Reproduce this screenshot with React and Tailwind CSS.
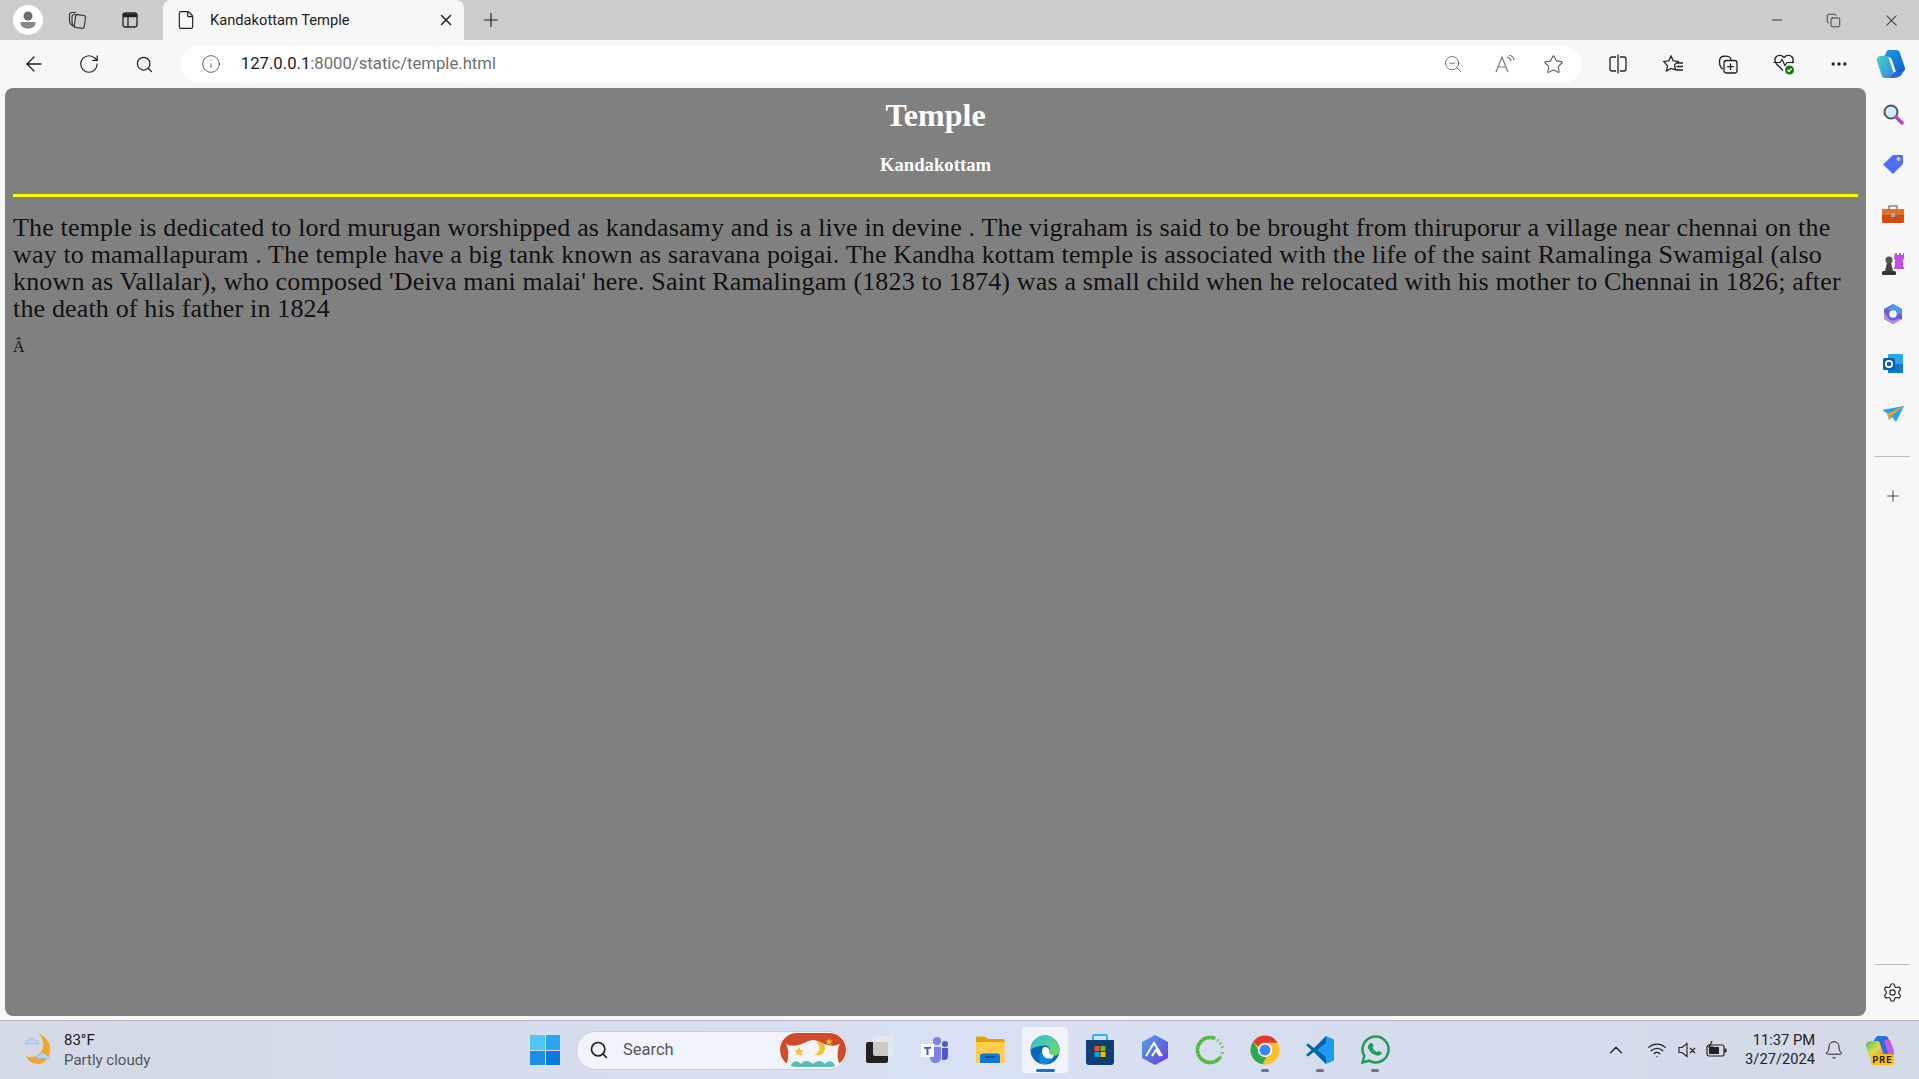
import React from "react";
import {
    ArrowLeft, RotateCw, Search, Info, ZoomOut, Star, Plus, X, Minus, Ellipsis,
    Settings, ChevronUp, Wifi, Bell, File, Copy,
} from "lucide-react";

const Profile = () => (
    <div className="w-[30px] h-[30px] rounded-full bg-white flex items-center justify-center">
        <svg width="24" height="24" viewBox="0 0 24 24">
            <circle cx="12" cy="8" r="4.500" fill="#6e6e6e" />
            <path d="M4.500 14h15v1.500c0 3-3.500 5-7.500 5s-7.500-2-7.500-5z" fill="#8a8a8a" />
        </svg>
    </div>
);

const Workspaces = () => (
    <svg width="20" height="20" viewBox="0 0 20 20" fill="none" stroke="#333" strokeWidth="1.1">
        <rect x="8" y="5" width="10" height="13" rx="2" transform="rotate(8 13 11)" fill="#ccc" />
        <path d="M6 16c-2-1-3.500-3-3.500-6V5c0-1.500 1-2.500 2.500-2.500h4" />
        <path d="M8 17c-2-1-3-3-3-5V7c0-1.500 1-2.500 2.500-2.500h4" />
    </svg>
);

const TabsIcon = () => (
    <svg width="20" height="20" viewBox="0 0 20 20" fill="none" stroke="#222" strokeWidth="1.3">
        <rect x="3" y="3" width="14" height="14" rx="2.500" />
        <path d="M3 5.500h14" strokeWidth="3.500" />
        <path d="M8 7v10" />
    </svg>
);

const ReadAloud = () => (
    <svg width="22" height="22" viewBox="0 0 22 22" fill="none" stroke="#777" strokeWidth="1.2">
        <path d="M2 19 8 4l6 15M4.500 14h7" />
        <path d="M13 4c2 .5 3.500 2 4 4M15 2c2.500.5 4.500 2.500 5 5" />
    </svg>
);

const SplitScreen = () => (
    <svg width="22" height="22" viewBox="0 0 22 22" fill="none" stroke="#222" strokeWidth="1.3">
        <path d="M9 4H5C3.800 4 3 4.800 3 6v10c0 1.200.8 2 2 2h4M13 4h4c1.200 0 2 .8 2 2v10c0 1.200-.8 2-2 2h-4M11 1.500v19" />
    </svg>
);

const FavList = () => (
    <svg width="22" height="22" viewBox="0 0 22 22" fill="none" stroke="#222" strokeWidth="1.3">
        <path d="m9 3 2.200 4.800 5 .6-3.700 3.500 1 5L9 15.400 4.500 18l1-5.100L1.800 8.400l5-.6z" />
        <path d="M15 10h6M14.500 13.500H21M14 17h7" />
    </svg>
);

const Collections = () => (
    <svg width="22" height="22" viewBox="0 0 22 22" fill="none" stroke="#222" strokeWidth="1.3">
        <path d="M6 16c-2-1-3.500-4-3.500-7 0-3 1-5 3-5.500 2-.5 5-.5 7 .5 1 .5 1.500 1.500 1.500 3" />
        <rect x="7" y="7.500" width="13" height="12.500" rx="2.500" fill="#f7f7f7" />
        <path d="M13.500 10.500v6.500M10.200 13.700h6.600" />
    </svg>
);

const Health = () => (
    <svg width="24" height="24" viewBox="0 0 24 24" fill="none">
        <path d="M12 5.500C10 2.800 6 2.500 4 5c-1.500 2-1.200 5 .8 7.200L11 18.500M12 5.500c2-2.700 6-3 8-.5 1.500 2 1.200 4.500 0 6" stroke="#222" strokeWidth="1.3" />
        <path d="M1.500 10.500H8l2-3 3 6 2-3h7" stroke="#222" strokeWidth="1.2" />
        <circle cx="17.500" cy="18" r="4.500" fill="#107c10" />
        <path d="m15.500 18 1.500 1.500 2.500-3" stroke="#fff" strokeWidth="1.2" />
    </svg>
);

const Copilot = ({ size = 30 }) => (
    <svg width={size} height={size} viewBox="0 0 30 30">
        <defs>
            <linearGradient id="cpa" x1="0" y1="0" x2="1" y2="1">
                <stop offset="0" stopColor="#1b9de2" />
                <stop offset="1" stopColor="#0b5fd0" />
            </linearGradient>
            <linearGradient id="cpb" x1="0" y1="0" x2="1" y2="1">
                <stop offset="0" stopColor="#37d6c0" />
                <stop offset="1" stopColor="#2f7fe6" />
            </linearGradient>
        </defs>
        <path d="M13 1h7c2 0 3.500 1.200 4 3l5 15c.5 2-1 4-3 4h-6l-4-12c-.5-2-2-3-4-3H8l2-4c.5-2 1.500-3 3-3z" fill="url(#cpa)" />
        <path d="M4 7h8l5 15c.5 2-.5 7-4 7H9c-2 0-3-1-3.500-3L1 12c-.5-2 1-5 3-5z" fill="url(#cpb)" opacity=".95" />
        <path d="M17 29h-5c2 0 3.500-1.500 4-3l2-3h9c-1 3-4 6-10 6z" fill="#2563d8" />
    </svg>
);

// coloured extension icons of the sidebar
const SideIcons = [
    <svg key="s" width="22" height="22" viewBox="0 0 22 22">
        <circle cx="9" cy="9" r="6.500" fill="#cfeaf8" stroke="#555" strokeWidth="2" />
        <path d="m14 14 6 6" stroke="#c837d8" strokeWidth="3.500" strokeLinecap="round" />
    </svg>,
    <svg key="t" width="22" height="22" viewBox="0 0 22 22">
        <path d="M11 2h9c.6 0 1 .4 1 1v8l-10 10L1 11.500z" fill="#4f6ef7" />
        <circle cx="16.500" cy="6" r="2" fill="#f4c542" />
    </svg>,
    <svg key="b" width="24" height="22" viewBox="0 0 24 22">
        <path d="M8 6V3h8v3" fill="none" stroke="#888" strokeWidth="1.500" />
        <rect x="1" y="6" width="22" height="14" rx="1.500" fill="#cf4e14" />
        <rect x="1" y="6" width="22" height="6" fill="#e2702a" />
        <rect x="10" y="10" width="4" height="4" fill="#aaa" />
    </svg>,
    <svg key="c" width="24" height="24" viewBox="0 0 24 24">
        <path d="M14 1h2v2h2V1h2v2h2V1h1v6l-1 1v7h-8V8l-1-1z" fill="#c04ee8" />
        <path d="M13 15h10v2H13z" fill="#c04ee8" />
        <circle cx="8" cy="8" r="3.500" fill="#555" />
        <path d="M6 11h4l2 8H4z" fill="#444" />
        <rect x="1" y="19" width="14" height="4" rx="1.500" fill="#333" />
    </svg>,
    <svg key="m" width="22" height="22" viewBox="0 0 22 22">
        <path d="M11 1 20 6v10l-9 5-9-5V6z" fill="#6a5fd6" />
        <path d="M11 1 20 6v5h-5c0-2-2-4-4-4H5z" fill="#3f9fe0" />
        <path d="M2 9v7l9 5 9-5h-5c-2 2-6 2-8 0z" fill="#b78be0" />
        <circle cx="11" cy="11" r="3.800" fill="#f7f7f7" />
    </svg>,
    <svg key="o" width="22" height="22" viewBox="0 0 22 22">
        <rect x="6" y="1" width="15" height="19" rx="1" fill="#28a8ea" />
        <path d="M6 11h15v9H6z" fill="#0f78d4" />
        <rect x="1" y="5" width="12" height="12" rx="1.500" fill="#0a5fb0" />
        <circle cx="7" cy="11" r="3.200" fill="none" stroke="#fff" strokeWidth="1.700" />
    </svg>,
    <svg key="p" width="22" height="18" viewBox="0 0 22 18">
        <path d="M0 5 22 1 14 17l-4-5-3 3-1-6z" fill="#29a3f0" />
        <path d="M5 9 22 1 9 11 7 15z" fill="#f0a51e" />
    </svg>,
];

const Windows = () => (
    <div className="grid grid-cols-2 gap-[1px] w-[30px] h-[30px]">
        <div className="bg-[#52c5f8]" />
        <div className="bg-[#2ba5ef]" />
        <div className="bg-[#1a8fe6]" />
        <div className="bg-[#0a78dc]" />
    </div>
);

const SearchArt = () => (
    <svg width="66" height="34" viewBox="0 0 66 34" className="rounded-full">
        <rect width="66" height="34" fill="#f4f4fb" />
        <path d="M0 0h66v5c-5 7-11 9-18 7-6-1-10-5-15-5s-9 4-15 5C11 14 5 12 0 5z" fill="#d24a2a" />
        <path d="M0 4c8 5 10 16 7 26H0zM66 4c-8 5-10 16-7 26h7z" fill="#d24a2a" />
        <path d="M10 34c3-7 8-7 11-3 3-4 8-4 12 0 4-4 9-4 12 0 3-4 8-4 11 3z" fill="#5bbcb4" />
        <path d="M36 9c5 3 5 10-2 13 4 1 9 0 11-5 1-5-3-9-9-8z" fill="#f3c12f" />
        <path d="m19 14 1.500 3 3 .5-2.200 2 .5 3-2.800-1.500-2.800 1.500.5-3-2.200-2 3-.5zM49 5l1 2.500 2.500.3-1.800 1.700.5 2.500-2.200-1.200-2.200 1.200.5-2.500-1.800-1.700 2.500-.3z" fill="#f3c12f" />
    </svg>
);

const TaskView = () => (
    <svg width="30" height="30" viewBox="0 0 30 30">
        <rect x="1" y="7" width="22" height="21" rx="2" fill="#222" />
        <rect x="8" y="1" width="21" height="20" rx="2" fill="#e8e8ea" fillOpacity=".85" />
    </svg>
);

const Teams = () => (
    <svg width="28" height="28" viewBox="0 0 28 28">
        <circle cx="16" cy="5" r="4" fill="#7b83eb" />
        <circle cx="24" cy="8" r="3" fill="#5059c9" />
        <path d="M9 11h11v10c0 4-2.500 6-5.500 6S9 25 9 21z" fill="#7b83eb" />
        <path d="M21 12h6v8c0 3-2 4-4 4h-2z" fill="#5059c9" />
        <rect x="0" y="8" width="13" height="13" fill="#fff" />
        <path d="M3 11h7v1.800H7.500V19h-2v-6.200H3z" fill="#4b53bc" />
    </svg>
);

const Folder = () => (
    <svg width="30" height="28" viewBox="0 0 30 28">
        <path d="M1 2c0-1 .5-1.500 1.500-1.500H10L13 3h15c1 0 1.500.5 1.500 1.500V8H1z" fill="#e0a400" />
        <path d="M1 6h28.500v21H1z" fill="#ffcd4a" />
        <path d="M5 20c0-1.500 1-2.500 2.500-2.500h15c1.500 0 2.500 1 2.500 2.500v7H5z" fill="#0f78d4" />
        <path d="M10 21h10" stroke="#063f78" strokeWidth="1.200" />
    </svg>
);

const Edge = () => (
    <svg width="30" height="30" viewBox="0 0 30 30">
        <defs>
            <linearGradient id="ega" x1="0" y1="0" x2="1" y2="1">
                <stop offset="0" stopColor="#34c1d8" />
                <stop offset="1" stopColor="#6fdc5a" />
            </linearGradient>
        </defs>
        <circle cx="15" cy="15" r="14.500" fill="#0c66b8" />
        <path d="M.5 15C1 6 8 .5 15 .5 24 .5 29.500 8 29.500 15.500c0 3-2 5-5 5-3.500 0-6-1.500-6-3.500 2-2 1.500-6-3.500-6.500C10 11 5 11 .5 15z" fill="url(#ega)" />
        <path d="M14 12c4 0 6 2 5 5-1 1 2 3 5 3.500-3 6-8 9-13 8 3-1 2-4 2-7-1-4-2-7 1-9.500z" fill="#fff" />
        <path d="M12 16c0 6 5 9 11 7-2 3-5 6-9 6-4 0-5-3-5-6s1-6 3-7z" fill="#0a8ad6" />
    </svg>
);

const Store = () => (
    <svg width="30" height="32" viewBox="0 0 30 32">
        <path d="M8 7V2.500C8 1.500 8.500 1 9.500 1h11c1 0 1.500.5 1.500 1.500V7" fill="none" stroke="#2fb8ec" strokeWidth="2" />
        <path d="M1 6h28v22c0 2-1 3-3 3H4c-2 0-3-1-3-3z" fill="#113e73" />
        <rect x="9.500" y="12" width="5" height="5" fill="#f25022" />
        <rect x="15.500" y="12" width="5" height="5" fill="#7fba00" />
        <rect x="9.500" y="18" width="5" height="5" fill="#00a4ef" />
        <rect x="15.500" y="18" width="5" height="5" fill="#ffb900" />
    </svg>
);

const Hex = () => (
    <svg width="30" height="32" viewBox="0 0 30 32">
        <defs>
            <linearGradient id="hxa" x1="0" y1="0" x2="1" y2="1">
                <stop offset="0" stopColor="#4aa8ec" />
                <stop offset="1" stopColor="#6a3bd8" />
            </linearGradient>
        </defs>
        <path d="M15 1 28 8v16l-13 7-13-7V8z" fill="url(#hxa)" />
        <path d="m6 22 8-13 8 13M12 22l4-6 4 6" fill="none" stroke="#fff" strokeWidth="2" />
    </svg>
);

const Ring = () => (
    <svg width="30" height="30" viewBox="0 0 30 30" fill="none">
        <circle cx="15" cy="15" r="12.500" stroke="#46b52f" strokeWidth="3.500" strokeDasharray="56 23" strokeDashoffset="-8" />
        <circle cx="15" cy="15" r="12.500" stroke="#6fc65a" strokeWidth="3.500" strokeDasharray="2 2" strokeDashoffset="-62" opacity=".8" />
    </svg>
);

const Chrome = () => (
    <svg width="30" height="30" viewBox="0 0 30 30">
        <circle cx="15" cy="15" r="14.500" fill="#fbc02d" />
        <path d="M15 .5a14.500 14.500 0 0 1 12.600 7.200H15a7.300 7.300 0 0 0-6.600 4.200L3.300 6.500A14.500 14.500 0 0 1 15 .5z" fill="#e33b2e" />
        <path d="M3.300 6.500 9 16.500a7.300 7.300 0 0 0 7.500 5.300l-4 7.500A14.500 14.500 0 0 1 3.300 6.500z" fill="#2da94f" />
        <circle cx="15" cy="15" r="7" fill="#fff" />
        <circle cx="15" cy="15" r="5.500" fill="#4285f4" />
    </svg>
);

const VSCode = () => (
    <svg width="30" height="30" viewBox="0 0 30 30">
        <path d="M21 1 29 4.500v21L21 29 8 16z" fill="#1f9cf0" />
        <path d="M21 1 9 13 3 8.500 1 10l5.500 5L1 20l2 1.500L9 17l12 12v-7l-9-7 9-7z" fill="#0065a9" />
    </svg>
);

const WhatsApp = () => (
    <svg width="30" height="30" viewBox="0 0 30 30" fill="none">
        <path d="M2.500 27.500 4.300 21A13 13 0 1 1 9 25.700z" stroke="#1e9e5a" strokeWidth="2.500" />
        <path d="M10 8.500c1-1 2-1 2.500 0l1 2.500-1 1.500c1 2 2.500 3.500 4.500 4.500l1.500-1 2.500 1c1 .5 1 1.500 0 2.500-1.500 1.500-4 1.500-7 0-3-1.500-5-4-6-6.500-.5-2 .5-3.500 2-4.500z" fill="#1e9e5a" />
    </svg>
);

const WeatherIcon = () => (
    <svg width="36" height="36" viewBox="0 0 34 34">
        <path d="M16 2a15 15 0 0 1 2 28C11 31 6 28 4 23c8 2 16-2 16-11 0-4-2-8-4-10z" fill="#f5a623" />
        <path d="M3 11c0-2 1.500-3 3-3 1-3 6-3 7 0 2 0 3 1.500 3 3z" fill="#b9d3f2" stroke="#8fb2e0" strokeWidth=".6" />
        <path d="M13 25c0-2 1.500-3 3-3 1-3 6-3 7 0 2 0 3 1.500 3 3z" fill="#b9d3f2" stroke="#8fb2e0" strokeWidth=".6" />
    </svg>
);

const TrayCopilot = () => (
    <div className="relative w-[30px] h-[30px]">
        <svg width="30" height="26" viewBox="0 0 30 26">
            <defs>
                <linearGradient id="tca" x1="0" y1="0" x2="1" y2="1">
                    <stop offset="0" stopColor="#3cc86a" />
                    <stop offset=".5" stopColor="#e8d84a" />
                    <stop offset="1" stopColor="#e05aa8" />
                </linearGradient>
            </defs>
            <path d="M12 1h8c2 0 3 1 3.500 3l5 14c.5 2-1 4-3 4h-7L14 9c-.5-1-2-2-4-2H8z" fill="#2a6fe0" />
            <path d="M5 6h9l5 14c.5 2-1 5-4 5H8c-2 0-3-1-3.500-3L1 11c-.5-2 1.500-5 4-5z" fill="url(#tca)" />
            <path d="M19 5h6l4 11c0 2-1 3-3 3h-3z" fill="#c45ae0" />
        </svg>
        <div className="absolute left-[6px] top-[19px] w-[23px] h-[11px] rounded-[3px] bg-[#fbbf17] text-[9px] leading-[11px] font-bold tracking-[1px] text-center text-[#222]">PRE</div>
    </div>
);

const TaskIcon = ({ children, active, dot }) => (
    <div className={`relative w-[46px] h-[46px] rounded-[4px] flex items-center justify-center ${active ? "bg-[#f1f3fb]" : ""}`}>
        {children}
        {active && <div className="absolute bottom-[1px] left-[14px] w-[19px] h-[3px] rounded-full bg-[#0a78d4]" />}
        {dot && <div className="absolute bottom-[1px] left-[19px] w-[8px] h-[3px] rounded-full bg-[#70737c]" />}
    </div>
);

export default function App() {
    return (
        <div className="w-[1919px] h-[1079px] overflow-hidden flex flex-col bg-[#f7f7f7] font-['Inter','Segoe_UI',sans-serif]">
            {/* tab strip */}
            <div className="h-10 bg-[#cccccc] flex items-center shrink-0">
                <div className="flex items-center pl-[13px] w-[163px]">
                    <Profile />
                    <div className="ml-[24px]"><Workspaces /></div>
                    <div className="ml-[33px]"><TabsIcon /></div>
                </div>
                <div className="w-[301px] h-10 rounded-t-lg bg-[#f7f7f7] flex items-center pl-[13px] pr-[9px]">
                    <File size={20} strokeWidth={1.4} color="#222" />
                    <span className="ml-[14px] flex-1 text-[14.700px] text-[#222] font-['Roboto',sans-serif]">Kandakottam Temple</span>
                    <X size={18} color="#222" />
                </div>
                <Plus size={22} strokeWidth={1.3} color="#222" className="ml-[16px]" />
                <div className="ml-auto flex items-center gap-[41px] pr-[18px]">
                    <Minus size={16} strokeWidth={1.3} color="#222" />
                    <Copy size={15} strokeWidth={1.3} color="#222" />
                    <X size={19} strokeWidth={1.3} color="#222" />
                </div>
            </div>

            {/* toolbar */}
            <div className="h-[46px] flex items-center shrink-0 pl-[22px] pr-[13px] pt-[2px]">
                <ArrowLeft size={24} strokeWidth={1.3} color="#222" />
                <RotateCw size={22} strokeWidth={1.3} color="#222" className="ml-[32px]" />
                <Search size={19} strokeWidth={1.6} color="#222" className="ml-[35px]" />
                <div className="ml-[27px] w-[1405px] h-[37px] rounded-full bg-white flex items-center pl-[20px] pr-[18px]">
                    <Info size={20} strokeWidth={1.1} color="#555" />
                    <span className="ml-[20px] text-[16.700px] text-[#1a1a1a] font-['Roboto',sans-serif]">127.0.0.1<span className="text-[#6f6f6f]">:8000/static/temple.html</span></span>
                    <div className="ml-auto flex items-center gap-[31px]">
                        <ZoomOut size={20} strokeWidth={1.2} color="#777" />
                        <ReadAloud />
                        <Star size={21} strokeWidth={1.2} color="#555" className="-ml-[4px]" />
                    </div>
                </div>
                <div className="ml-[25px] flex items-center gap-[33px]">
                    <SplitScreen />
                    <FavList />
                    <Collections />
                    <Health />
                    <Ellipsis size={20} color="#222" />
                </div>
                <div className="ml-[27px]"><Copilot /></div>
            </div>

            {/* page + sidebar */}
            <div className="flex-1 flex min-h-0">
                <div className="flex-1 ml-[5px] mt-[2px] mb-[4px] rounded-lg bg-[#808080] px-2 font-['Liberation_Serif',serif] min-w-0">
                    <h1 className="text-center text-[32px] leading-[37px] font-bold text-white mt-[9px]">Temple</h1>
                    <h3 className="text-center text-[18.700px] leading-[21px] font-bold text-white mt-[20px]">Kandakottam</h3>
                    <div className="h-[3px] bg-[#ffff00] mt-[19px]" />
                    <p className="text-[26px] leading-[27px] text-[#111] mt-[17px] tracking-[0.16px]">
                        The temple is dedicated to lord murugan worshipped as kandasamy and is a live in devine . The vigraham is said to be brought from thiruporur a village near chennai on the<br />
                        way to mamallapuram . The temple have a big tank known as saravana poigai. The Kandha kottam temple is associated with the life of the saint Ramalinga Swamigal (also<br />
                        known as Vallalar), who composed 'Deiva mani malai' here. Saint Ramalingam (1823 to 1874) was a small child when he relocated with his mother to Chennai in 1826; after<br />
                        the death of his father in 1824
                    </p>
                    <p className="text-[16px] leading-[18px] text-[#111] mt-[16px]">Â</p>
                </div>
                <div className="w-[53px] flex flex-col items-center">
                    <div className="flex flex-col items-center gap-[26px] w-[22px] mt-[16px]">
                        {SideIcons.map((icon, i) => (
                            <div key={i} className="h-6 flex items-center justify-center">{icon}</div>
                        ))}
                    </div>
                    <div className="w-[35px] h-px bg-[#bdbdbd] mt-[30px]" />
                    <Plus size={18} strokeWidth={1.2} color="#333" className="mt-[30px]" />
                    <div className="w-[35px] h-px bg-[#bdbdbd] mt-auto" />
                    <Settings size={21} strokeWidth={1.3} color="#222" className="mt-[17px] mb-[17px]" />
                </div>
            </div>

            {/* taskbar */}
            <div className="h-[59px] shrink-0 border-t border-[#b6b9c4] bg-gradient-to-r from-[#d3d9e5] via-[#d8e0f3] to-[#d3d9e6] flex items-center relative">
                <div className="flex items-center pl-[22px] w-[530px]">
                    <WeatherIcon />
                    <div className="ml-[6px] text-[15px] leading-[20px] font-['Roboto',sans-serif]">
                        <div className="text-[#1a1a1a]">83°F</div>
                        <div className="text-[#555]">Partly cloudy</div>
                    </div>
                </div>
                <Windows />
                <div className="ml-[16px] w-[272px] h-[39px] rounded-full bg-[#f2f4fb] border border-[#c9ccda] flex items-center pl-[12px] pr-[1px]">
                    <Search size={20} strokeWidth={2} color="#222" />
                    <span className="ml-[14px] text-[16.500px] text-[#555] font-['Roboto',sans-serif]">Search</span>
                    <div className="ml-auto flex"><SearchArt /></div>
                </div>
                <div className="ml-[9px] flex items-center gap-[9px]">
                    <TaskIcon><TaskView /></TaskIcon>
                    <TaskIcon><Teams /></TaskIcon>
                    <TaskIcon><Folder /></TaskIcon>
                    <TaskIcon active><Edge /></TaskIcon>
                    <TaskIcon><Store /></TaskIcon>
                    <TaskIcon><Hex /></TaskIcon>
                    <TaskIcon><Ring /></TaskIcon>
                    <TaskIcon dot><Chrome /></TaskIcon>
                    <TaskIcon dot><VSCode /></TaskIcon>
                    <TaskIcon dot><WhatsApp /></TaskIcon>
                </div>
                <div className="ml-auto flex items-center pr-[24px]">
                    <ChevronUp size={22} strokeWidth={1.5} color="#222" />
                    <Wifi size={20} strokeWidth={1.5} color="#222" className="ml-[20px]" />
                    <svg width="20" height="20" viewBox="0 0 20 20" fill="none" stroke="#222" strokeWidth="1.1" className="ml-[10px]">
                        <path d="M2 7.500h3L10 3.500v13l-5-4H2zM13 8l5 5M18 8l-5 5" />
                    </svg>
                    <svg width="22" height="20" viewBox="0 0 22 20" className="ml-[9px]">
                        <rect x="1" y="5" width="17" height="11" rx="2" fill="none" stroke="#222" strokeWidth="1.200" />
                        <rect x="3" y="7" width="10" height="7" fill="#222" />
                        <rect x="18.500" y="8.500" width="2" height="4" fill="#222" />
                        <path d="M6 1 3 7h4l-2 5" fill="none" stroke="#222" strokeWidth="1.200" />
                    </svg>
                    <div className="ml-[17px] text-right text-[14.700px] leading-[19px] text-[#222] font-['Roboto',sans-serif]">
                        <div>11:37 PM</div>
                        <div>3/27/2024</div>
                    </div>
                    <Bell size={20} strokeWidth={1.2} color="#222" className="ml-[9px]" />
                    <div className="ml-[21px]"><TrayCopilot /></div>
                </div>
            </div>
        </div>
    );
}
